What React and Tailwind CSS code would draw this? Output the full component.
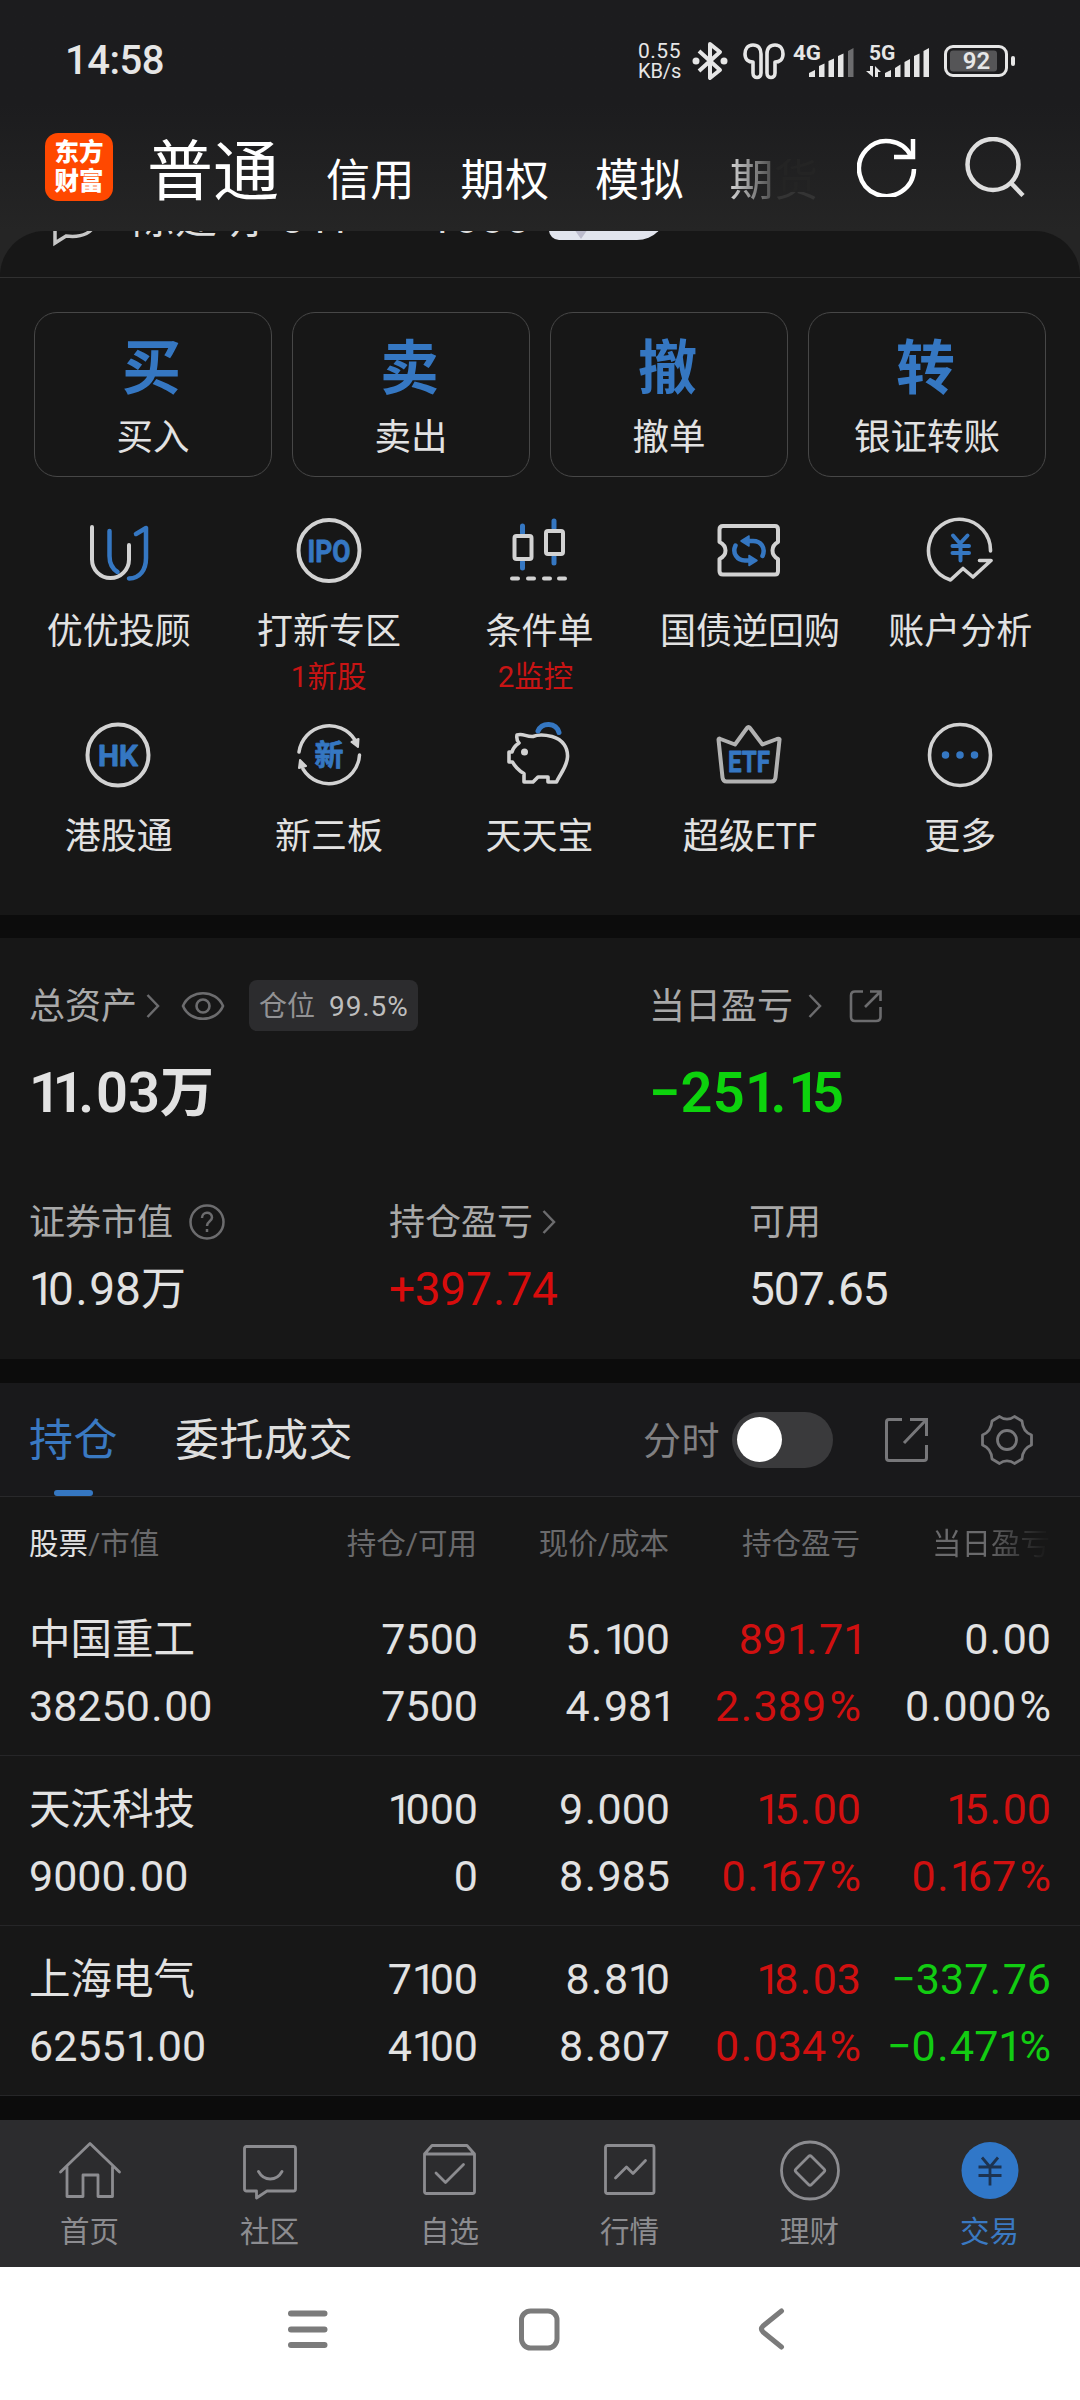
// src/App.jsx
import clsx from 'clsx';

const tradeButtons = [
  { mark: '买', label: '买入' },
  { mark: '卖', label: '卖出' },
  { mark: '撤', label: '撤单' },
  { mark: '转', label: '银证转账' },
];

const holdings = [
  {
    name: '中国重工', value: '38250.00', held: '7500', usable: '7500', price: '5.100', cost: '4.981',
    profit: '891.71', profitRate: '2.389%', day: '0.00', dayRate: '0.000%', tone: 'up', dayTone: 'flat',
  },
  {
    name: '天沃科技', value: '9000.00', held: '1000', usable: '0', price: '9.000', cost: '8.985',
    profit: '15.00', profitRate: '0.167%', day: '15.00', dayRate: '0.167%', tone: 'up', dayTone: 'up',
  },
  {
    name: '上海电气', value: '62551.00', held: '7100', usable: '4100', price: '8.810', cost: '8.807',
    profit: '18.03', profitRate: '0.034%', day: '−337.76', dayRate: '−0.471%', tone: 'up', dayTone: 'down',
  },
];

const toneClass = {
  up: 'text-[#d01010]',
  down: 'text-[#12cc12]',
  flat: 'text-[#e2e2e2]',
};

// Proportional figures: a narrow 1, a wider point and percent sign
const charClass = {
  '1': 'tracking-[-0.15em]',
  '.': 'px-[0.035em]',
  '%': 'pl-[0.08em]',
};

function Num({ children }) {
  return children.split(/([1.%])/).map((part, i) =>
    charClass[part] ? <span key={i} className={charClass[part]}>{part}</span> : part
  );
}

function StatusBar() {
  return (
    <div className="flex h-[121px] items-center text-[#e6e6e6]">
      <div className="ml-[65px] w-[573px] text-[40px] font-medium leading-none tracking-[-0.500px]">14:58</div>
      <div className="w-[45px] whitespace-nowrap text-[21px] leading-[20px] tracking-[0.500px]">
        <div>0.55</div>
        <div className="text-[20px] tracking-[-0.100px]">KB/s</div>
      </div>
      <svg className="ml-[9px]" width="36" height="40" viewBox="0 0 36 40" fill="none" stroke="currentColor" strokeWidth="4">
        <path d="M7 10 L28 29 L18 37 V3 L28 11 L7 30" strokeLinejoin="round" />
        <circle cx="4" cy="20" r="3.5" fill="currentColor" stroke="none" />
        <circle cx="32" cy="20" r="3.5" fill="currentColor" stroke="none" />
      </svg>
      <svg className="ml-[15px]" width="42" height="38" viewBox="0 0 42 38" fill="none" stroke="currentColor" strokeWidth="3.6" strokeLinejoin="round">
        <path d="M10 3 C4 3 2 8 2 12 C2 18 6 20 10 20 V31 C10 37 18 37 18 31 V12 C18 6 15 3 10 3 Z" />
        <path d="M32 3 C38 3 40 8 40 12 C40 18 36 20 32 20 V31 C32 37 24 37 24 31 V12 C24 6 27 3 32 3 Z" />
      </svg>
      <svg className="ml-[8px]" width="62" height="46" viewBox="0 -6 62 46" fill="currentColor">
        <text x="0" y="15.500" fontSize="21" fontWeight="700" textLength="28" lengthAdjust="spacingAndGlyphs">4G</text>
        <path d="M16 33 V29 L22 26 V33 Z" />
        <path d="M26 33 V22 L31.500 19.500 V33 Z" />
        <path d="M35.500 33 V17 L41 14.500 V33 Z" />
        <path d="M45 33 V12 L50.500 9.500 V33 Z" />
        <path d="M55 33 V7 L60.500 4 V33 Z" opacity="0.4" />
      </svg>
      <svg className="ml-[11px]" width="65" height="46" viewBox="0 -6 65 46" fill="currentColor">
        <text x="3" y="15.500" fontSize="21" fontWeight="700">5G</text>
        <path d="M4 22 H7 V33 L0 27 H4 Z M9 22 L15 28 H12 V33 H9 Z" />
        <path d="M19 33 V29 L25 26 V33 Z" />
        <path d="M29 33 V24 L34.500 20.500 V33 Z" />
        <path d="M38.500 33 V18 L44 15 V33 Z" />
        <path d="M48 33 V12 L53.500 9.500 V33 Z" />
        <path d="M57.500 33 V7 L63 4 V33 Z" />
      </svg>
      <svg className="ml-[13px]" width="72" height="32" viewBox="0 0 72 32" fill="none">
        <rect x="1.500" y="1.500" width="61" height="29" rx="7.500" stroke="currentColor" strokeWidth="3" />
        <rect x="6" y="5.500" width="47" height="21" rx="3" fill="#555557" />
        <rect x="67" y="11" width="4" height="10" rx="2" fill="currentColor" />
        <text x="32.500" y="24" textAnchor="middle" fontSize="24" fontWeight="600" fill="currentColor">92</text>
      </svg>
    </div>
  );
}

function Header() {
  return (
    <div className="flex h-[92px] items-center whitespace-nowrap text-white">
      <div className="ml-[45px] flex h-[68px] w-[68px] flex-col items-center justify-center rounded-[13px] bg-[#ff4800] text-[24.500px] font-black leading-[29px]">
        <span>东方</span>
        <span>财富</span>
      </div>
      <div className="ml-[34px] mt-[12px] text-[66px] leading-[66px]">普通</div>
      <div className="ml-[47px] mt-[28px] flex gap-[45.500px] text-[44px] leading-[44px] tracking-[0.500px]">
        <span>信用</span>
        <span>期权</span>
        <span>模拟</span>
        {/* last tab fades out behind the buttons, only the foot of its second character stays */}
        <span className="flex">
          <span className="bg-linear-to-r from-[#d4d4d4] to-[#4a4a4a] bg-clip-text text-transparent">期</span>
          <span className="bg-linear-to-b from-[#242424] from-74% to-[#343434] to-76% bg-clip-text text-transparent">货</span>
        </span>
      </div>
      <svg className="ml-[38px]" width="60" height="60" viewBox="0 0 60 60" fill="none" stroke="#fff" strokeWidth="4.500">
        <path d="M57 32 A27.500 27.500 0 1 1 54 19" />
        <path d="M56 2 V20 H37" />
      </svg>
      <svg className="ml-[48px]" width="60" height="60" viewBox="0 0 60 60" fill="none" stroke="#dedede" strokeWidth="4.500">
        <circle cx="28" cy="27.500" r="25.500" />
        <path d="M46 46 L58 58.500" />
      </svg>
    </div>
  );
}

// Account line, scrolled almost out of sight under the header
function AccountStrip() {
  return (
    <div className="bg-[#252525]">
      <div className="flex h-[46px] items-start overflow-hidden rounded-t-[45px] bg-[#171717]">
        <svg className="ml-[51px] -mt-[26px] shrink-0" width="46" height="43" viewBox="0 0 46 43" fill="none" stroke="#c6c6c6" strokeWidth="3.500">
          <path d="M4 38 V20 C4 8 14 2 23 2 C34 2 43 8 43 17 C43 27 32 33 15 31 Z" />
        </svg>
        <div className="ml-[35px] -mt-[33px] flex w-[417px] shrink-0 whitespace-nowrap text-[42px] leading-[42px] text-[#dedede]">
          <span className="w-[148px] tracking-[1px]">陈建明</span>
          <span>541<span className="tracking-[1.500px]">****</span><span className="tracking-[2px]">1000</span></span>
        </div>
        <div className="-mt-[35px] flex h-[44px] w-[118px] shrink-0 items-end rounded-bl-[10px] rounded-br-[30px] bg-[#e2e5ee]">
          <svg className="ml-[25px]" width="14" height="11" viewBox="0 0 14 11"><path d="M0 0 H14 L7 10 Z" fill="#bcbccd" /></svg>
        </div>
      </div>
    </div>
  );
}

const W = '#d2d2d2';
const B = '#3577c2';

function QuickIcon({ children, stroke = W }) {
  return (
    <svg width="68" height="68" viewBox="0 0 68 68" fill="none" stroke={stroke} strokeWidth="4" strokeLinecap="round" strokeLinejoin="round">
      {children}
    </svg>
  );
}

function IconText({ children, x = 34, y, size, length }) {
  return (
    <text x={x} y={y} textAnchor="middle" fontSize={size} fontWeight="700" textLength={length} lengthAdjust="spacingAndGlyphs" fill={B} stroke={B} strokeWidth="0.8">
      {children}
    </text>
  );
}

const quickEntries = [
  {
    label: '优优投顾',
    icon: (
      <QuickIcon>
        <path d="M8 11 V43.500 A18.500 18.500 0 0 0 45 43.500 V29" />
        <path d="M25.500 15 V40 C25.500 48 28 52.500 33.500 56 M52 18 L62 12 V42 C62 54 56 62 45 62.500" stroke={B} strokeWidth="4.500" />
      </QuickIcon>
    ),
  },
  {
    label: '打新专区', note: '1新股',
    icon: (
      <QuickIcon>
        <circle cx="34" cy="34.500" r="30.500" />
        <IconText y="45.500" size="31" length="43">IPO</IconText>
      </QuickIcon>
    ),
  },
  {
    label: '条件单', note: '2监控',
    icon: (
      <QuickIcon>
        <path d="M17.500 10 V17 M17.500 46 V52 M49 5 V12 M49 41 V47" stroke={B} strokeWidth="5" />
        <rect x="9.500" y="20" width="17" height="23" rx="2" />
        <rect x="41" y="15" width="17" height="23" rx="2" />
        <path d="M7 62.500 H13 M23 62.500 H29 M39 62.500 H45 M54 62.500 H60" />
      </QuickIcon>
    ),
  },
  {
    label: '国债逆回购',
    icon: (
      <QuickIcon>
        <path d="M8 10 H60 Q63 10 63 13.500 V26 Q57.500 29 57.500 34.500 Q57.500 40 63 43 V55 Q63 58.500 60 58.500 H8 Q4.500 58.500 4.500 55 V43 Q10.500 40 10.500 34.500 Q10.500 29 4.500 26 V13.500 Q4.500 10 8 10 Z" />
        <path d="M33 25 H38 C46 25 51 32 47.500 40 M35 44.500 H30 C22 44.500 17 37 20.500 29.500" stroke={B} strokeWidth="4.500" />
        <path d="M26 25 L34 20 V30 Z M42 44.500 L34 39.500 V49.500 Z" fill={B} stroke={B} strokeWidth="1.500" />
      </QuickIcon>
    ),
  },
  {
    label: '账户分析',
    icon: (
      <QuickIcon>
        <path d="M64.500 35 A31 31 0 1 0 24.500 64 L37 52.500 L47 61 L65 44.500 H53.500" strokeWidth="3.600" />
        <path d="M27 19.500 L34 27.500 L41.500 19.500 M26.500 30 H43 M26.500 37 H43 M34.500 28 V44.500" stroke={B} />
      </QuickIcon>
    ),
  },
  {
    label: '港股通',
    icon: (
      <QuickIcon>
        <circle cx="34" cy="34" r="30.500" />
        <IconText y="45" size="30" length="40">HK</IconText>
      </QuickIcon>
    ),
  },
  {
    label: '新三板',
    icon: (
      <QuickIcon>
        <path d="M4 31 A30.500 30.500 0 0 1 60 19 M64.500 34 A30.500 30.500 0 0 1 8 48" strokeWidth="3.500" />
        <path d="M56.500 21 L63.500 18 L63 26 Z M4 47 L5 39 L11 45 Z" fill={W} strokeWidth="2" />
        <IconText y="45" size="29" length="29">新</IconText>
      </QuickIcon>
    ),
  },
  {
    label: '天天宝',
    icon: (
      <QuickIcon>
        <path d="M12 14 C18 12 21 16 28 15.500 C34 13 41 14 47 15.500 C58 18.500 63 27 62.500 36 C62 46 55 53 51.500 61 H43 V56 H33 L28 61 H19 V52.500 C14 50 9 44 7.500 41 H4 V31 H7 C8 27 11 24 14 22 C12 20 11.500 17 12 14 Z" strokeWidth="3.600" />
        <path d="M33 10 C37 1 51 1 54 11.500" stroke={B} strokeWidth="5" />
        <circle cx="19.500" cy="31" r="3.500" fill={W} stroke="none" />
      </QuickIcon>
    ),
  },
  {
    label: '超级ETF',
    icon: (
      <QuickIcon stroke="#b2b2b2">
        <path d="M3.500 18.500 Q3.500 17 5.500 18 L20 23.500 L32 7 Q33.500 5 35 7 L47.500 23.500 L62 18 Q65 17 64.500 19 L60.500 56.500 Q60 60.500 56.500 60.500 H11.500 Q8 60.500 7.500 56.500 Z" />
        <IconText y="50.500" size="29" length="42">ETF</IconText>
      </QuickIcon>
    ),
  },
  {
    label: '更多',
    icon: (
      <QuickIcon>
        <circle cx="34" cy="34" r="30.500" strokeWidth="3.600" />
        <path d="M19.500 34 h0.010 M34 34 h0.010 M48.500 34 h0.010" stroke={B} strokeWidth="7.500" />
      </QuickIcon>
    ),
  },
];

function TradePanel() {
  return (
    <div className="h-[638px] border-t border-[#303030] bg-[#171717]">
      <div className="grid grid-cols-4 gap-[20px] px-[34px] pt-[34px]">
        {tradeButtons.map((b) => (
          <div key={b.mark} className="flex h-[165px] flex-col items-center rounded-[23px] border border-[#474747]">
            <div className="mr-[3px] mt-[26px] text-[59px] font-bold leading-[60px] text-[#3577c2]">{b.mark}</div>
            <div className="mt-[19px] text-[36.500px] leading-[40px] text-[#e2e2e2]">{b.label}</div>
          </div>
        ))}
      </div>
      <div className="grid grid-cols-5 pl-[13px] pr-[15px] pt-[39px]">
        {quickEntries.map((q) => (
          <div key={q.label} className="flex h-[205px] flex-col items-center whitespace-nowrap">
            {q.icon}
            <div className="ml-px mt-[28px] text-[36px] leading-[40px] text-[#e2e2e2]">{q.label}</div>
            {q.note && <div className={clsx('mt-[8px] text-[29.500px] leading-[34px] text-[#c81414]', q.label === '条件单' && 'mr-[7px]')}>{q.note}</div>}
          </div>
        ))}
      </div>
    </div>
  );
}

function Chevron({ className }) {
  return (
    <svg className={className} width="14" height="24" viewBox="0 0 14 24" fill="none" stroke="#6c6c6e" strokeWidth="2.500">
      <path d="M1.500 1 L12 12 L1.500 23" />
    </svg>
  );
}

function Assets() {
  return (
    <div className="h-[421px] bg-[#171717] text-[#a9a9a9]">
      <div className="flex h-[135px] items-center px-[29px] text-[36px]">
        <div className="flex w-[620px] items-center">
          <span className="mt-[3px]">总资产</span>
          <Chevron className="ml-[9px]" />
          <svg className="ml-[21px]" width="44" height="30" viewBox="0 0 44 30" fill="none" stroke="#6c6c6e" strokeWidth="2.600">
            <path d="M2 15 C9 -2 35 -2 42 15 C35 32 9 32 2 15 Z" />
            <circle cx="22" cy="15" r="6.500" />
          </svg>
          <div className="ml-[24px] flex h-[51px] w-[169px] items-center rounded-[8px] bg-[#2c2c2e] pl-[10px] text-[28px]">
            <span className="mt-[2px] text-[#929294]">仓位</span>
            <span className="ml-[14px] mt-[2px] tracking-[0.900px] text-[#bebebe]">99.5%</span>
          </div>
        </div>
        <span className="mt-[3px]">当日盈亏</span>
        <Chevron className="ml-[15px]" />
        <svg className="ml-[27px]" width="34" height="34" viewBox="0 0 34 34" fill="none" stroke="#6c6c6e" strokeWidth="2.600">
          <path d="M14 2.500 H6 Q2 2.500 2 6.500 V28 Q2 32 6 32 H27 Q31.500 32 31.500 28 V18 M21 2.500 H31.500 V12 M31 3 L16 18" />
        </svg>
      </div>
      <div className="mt-px flex h-[38px] items-center px-[29px] text-[56px] font-semibold leading-none">
        <div className="w-[620px] text-[#e2e2e2]"><Num>11.03</Num><span className="text-[54px]">万</span></div>
        <div className="tracking-[0.200px] text-[#0dd30d]"><Num>−251.15</Num></div>
      </div>
      <div className="grid grid-cols-[360px_360px_300px] px-[29px] pt-[87px] text-[36px] leading-[48px]">
        <div className="flex items-center">
          <span>证券市值</span>
          <svg className="-mt-[2px] ml-[15px]" width="38" height="38" viewBox="0 0 38 38" fill="none" stroke="#6c6c6e" strokeWidth="2.500">
            <circle cx="19" cy="19" r="16.500" />
            <path d="M14 15 C14 8 24 8 24 14.500 C24 18.500 19 18 19 23 M19 26 V29" />
          </svg>
        </div>
        <div className="flex items-center">
          <span>持仓盈亏</span>
          <Chevron className="-mt-[2px] ml-[9px]" />
        </div>
        <div>可用</div>
      </div>
      <div className="mt-[15px] grid grid-cols-[360px_360px_300px] px-[29px] text-[46px] leading-[54px] text-[#e2e2e2]">
        <div><Num>10.98</Num><span className="text-[45px]">万</span></div>
        <div className="tracking-[-0.300px] text-[#d80c0c]"><Num>+397.74</Num></div>
        <div className="tracking-[-1px]"><Num>507.65</Num></div>
      </div>
    </div>
  );
}

function PositionTabs() {
  return (
    <div className="flex h-[114px] items-center whitespace-nowrap border-b border-[#29292b] bg-[#19191b] text-[44px] leading-[44px] tracking-[0.500px]">
      <div className="ml-[29px] flex h-[113px] w-[89px] flex-col items-center text-[#3a79c2]">
        <span className="mt-[36px]">持仓</span>
        <span className="mt-auto h-[6px] w-[39px] rounded-full bg-[#3577c2]" />
      </div>
      <div className="ml-[57px] mt-[3px] text-[#dedede]">委托成交</div>
      <div className="ml-[290px] mt-[2px] text-[38px] text-[#808082]">分时</div>
      <div className="ml-[12px] flex h-[56px] w-[101px] items-center rounded-full bg-[#3a3a3c] pl-[5px]">
        <div className="h-[45px] w-[45px] rounded-full bg-white" />
      </div>
      <svg className="ml-[51px]" width="45" height="46" viewBox="0 0 45 46" fill="none" stroke="#77777a" strokeWidth="3">
        <path d="M18 2.500 H5 Q2.500 2.500 2.500 5 V41 Q2.500 43.500 5 43.500 H40 Q42.500 43.500 42.500 41 V28 M26 2.500 H42.500 V19 M42 3 L20 26" />
      </svg>
      <svg className="ml-[52px]" width="52" height="52" viewBox="0 0 52 52" fill="none" stroke="#77777a" strokeWidth="2.800" strokeLinejoin="round">
        <path d="M18.500 2.500 C23 6 29 6 33.500 2.500 L41 7 C41.500 14 44 18.500 50.500 21 V31 C44 33.500 41.500 38 41 45 L33.500 49.500 C29 46 23 46 18.500 49.500 L11 45 C10.500 38 8 33.500 1.500 31 V21 C8 18.500 10.500 14 11 7 Z" />
        <circle cx="26" cy="26" r="9.500" />
      </svg>
    </div>
  );
}

function Cell({ top, bottom, tone = 'flat' }) {
  return (
    <div className={clsx('text-right', toneClass[tone])}>
      <div><Num>{top}</Num></div>
      <div><Num>{bottom}</Num></div>
    </div>
  );
}

function Holdings() {
  return (
    <div className="bg-[#171717]">
      <div className="grid h-[89px] grid-cols-[227px_221px_192px_191px_190px] items-center pl-[29px] pt-[5px] text-right text-[29.500px] text-[#6a6a6c]">
        <div className="text-left"><span className="text-[#e2e2e2]">股票</span>/市值</div>
        <div>持仓/可用</div>
        <div>现价/成本</div>
        <div>持仓盈亏</div>
        <div>
          <span className="bg-linear-to-r from-[#6a6a6c] from-45% to-[#1c1c1c] to-95% bg-clip-text text-transparent">当日盈亏</span>
        </div>
      </div>
      {holdings.map((h) => (
        <div key={h.name} className="grid h-[170px] grid-cols-[227px_222px_192px_191px_190px] border-b border-[#262628] pl-[29px] pt-[20px] text-[43px] leading-[67px]">
          <div className="text-[#e2e2e2]">
            <div className="text-[41.500px]">{h.name}</div>
            <div><Num>{h.value}</Num></div>
          </div>
          <Cell top={h.held} bottom={h.usable} />
          <Cell top={h.price} bottom={h.cost} />
          <Cell top={h.profit} bottom={h.profitRate} tone={h.tone} />
          <Cell top={h.day} bottom={h.dayRate} tone={h.dayTone} />
        </div>
      ))}
    </div>
  );
}

const navItems = [
  { label: '首页', icon: <path d="M2.500 34 L32 5.500 L61.500 34 M9 29 V58.500 H25 V37 H40 V58.500 H54.500 V29" /> },
  { label: '社区', icon: <path d="M8.500 8.500 H55.500 Q57.500 8.500 57.500 10.500 V51 Q57.500 53 55.500 53 H29 L18.500 60 V53 H8.500 Q6.500 53 6.500 51 V10.500 Q6.500 8.500 8.500 8.500 Z M20.500 33.500 C26 43.500 38.500 43.500 44 33.500" /> },
  { label: '自选', icon: <path d="M6.500 16 L14 7.500 H49 L56.500 16 V53.500 Q56.500 55.500 54.500 55.500 H8.500 Q6.500 55.500 6.500 53.500 Z H56.500 M18 35 L27.500 44.500 L45.500 26.500" /> },
  { label: '行情', icon: <path d="M9.500 7.500 H54 Q56 7.500 56 9.500 V53.500 Q56 55.500 54 55.500 H9.500 Q7.500 55.500 7.500 53.500 V9.500 Q7.500 7.500 9.500 7.500 Z M17.500 40 L28.500 29 L35 35.500 L47.500 22.500" /> },
  { label: '理财', icon: <><circle cx="32" cy="32.500" r="28.500" /><path d="M30.500 18.500 Q32 17 33.500 18.500 L46 31 Q47.500 32.500 46 34 L33.500 46.500 Q32 48 30.500 46.500 L18 34 Q16.500 32.500 18 31 Z" /></> },
  { label: '交易', active: true, icon: <><circle cx="32" cy="32.500" r="28.500" fill="#3077c8" stroke="none" /><path d="M24 19.500 L32 29 L40 19.500 M20.500 29 H43.500 M20.500 37.500 H43.500 M32 29 V47.500" stroke="#1d3350" strokeLinecap="butt" /></> },
];

function BottomNav() {
  return (
    <div className="grid h-[147px] grid-cols-6 bg-[#2c2c2e]">
      {navItems.map((n) => (
        <div key={n.label} className={clsx('flex flex-col items-center pr-px pt-[18px] text-[29.500px] leading-[34px]', n.active ? 'text-[#3a79c2]' : 'text-[#8c8c90]')}>
          <svg width="64" height="64" viewBox="0 0 64 64" fill="none" stroke="currentColor" strokeWidth="2.800" strokeLinecap="round" strokeLinejoin="round">{n.icon}</svg>
          <span className="mt-[13px]">{n.label}</span>
        </div>
      ))}
    </div>
  );
}

function SystemNav() {
  return (
    <div className="flex h-[133px] items-start bg-white pt-[40px]">
      <svg className="ml-[286px]" width="43" height="44" viewBox="0 0 43 44" fill="none" stroke="#7b7b7b" strokeWidth="6" strokeLinecap="round">
        <path d="M5 6.500 H38.500 M5 22.500 H38.500 M5 38 H38.500" />
      </svg>
      <svg className="ml-[189px]" width="43" height="44" viewBox="0 0 43 44" fill="none" stroke="#7b7b7b" strokeWidth="5">
        <rect x="3.500" y="4" width="35.500" height="37" rx="9" />
      </svg>
      <svg className="ml-[196px]" width="29" height="44" viewBox="0 0 29 44" fill="none" stroke="#7b7b7b" strokeWidth="5" strokeLinecap="round" strokeLinejoin="round">
        <path d="M24.500 4 L6 19 Q3 22 6 25 L24.500 40" />
      </svg>
    </div>
  );
}

function App() {
  return (
    <div className="h-[2400px] w-[1080px] overflow-hidden bg-[#0c0c0c] font-[Roboto,'Noto_Sans_CJK_SC',sans-serif]">
      <div className="h-[231px] bg-linear-to-b from-[#1c1c1e] from-45% to-[#252525]">
        <StatusBar />
        <Header />
      </div>
      <AccountStrip />
      <TradePanel />
      <div className="mt-[23px]">
        <Assets />
      </div>
      <div className="mt-[24px]">
        <PositionTabs />
        <Holdings />
      </div>
      <div className="mt-[24px]">
        <BottomNav />
        <SystemNav />
      </div>
    </div>
  );
}

export default App;
